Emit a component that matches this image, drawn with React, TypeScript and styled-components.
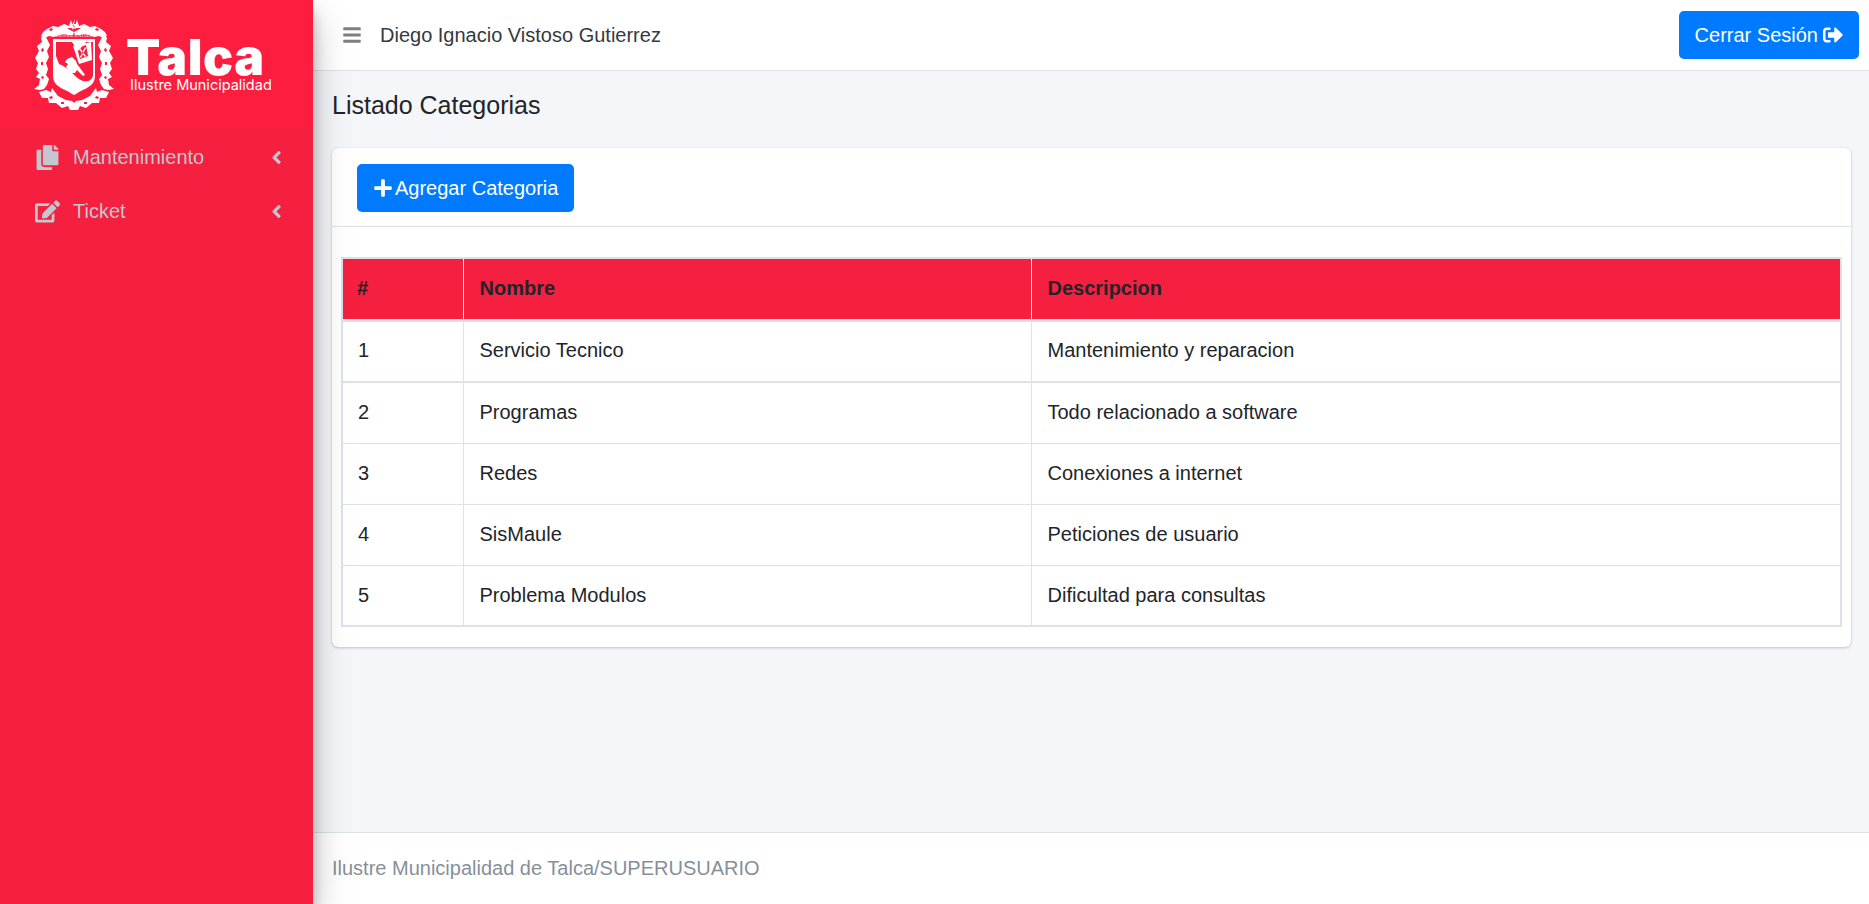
import styled, { createGlobalStyle } from 'styled-components';
import { FaAngleLeft, FaBars, FaCopy, FaEdit, FaPlus, FaSignOutAlt } from 'react-icons/fa';

const GlobalStyle = createGlobalStyle`
  html, body {
    margin: 0;
    padding: 0;
    height: 100%;
  }
  body {
    font-family: "Liberation Sans", Arial, sans-serif;
    font-size: 20px;
    color: #212529;
    background: #f4f6f9;
  }
  * {
    box-sizing: border-box;
  }
`;

const Layout = styled.div`
  display: flex;
  height: 904px;
  overflow: hidden;
`;

const Sidebar = styled.aside`
  position: relative;
  z-index: 2;
  flex: 0 0 313px;
  background: #f5203f;
  box-shadow: 0 17px 35px rgba(0, 0, 0, 0.25), 0 12px 12px rgba(0, 0, 0, 0.22);
`;

const Brand = styled.div`
  height: 127px;
  padding: 18px 0 0 34px;
  display: flex;
  background: #fd1d3f;
  color: #fff;
`;

const Crest = styled.svg`
  width: 80px;
  height: 92px;
  flex: none;
`;

const BrandText = styled.div`
  margin: 19px 0 0 12px;
  display: flex;
  flex-direction: column;
`;

const BrandName = styled.span`
  font-family: Inter, sans-serif;
  font-size: 50px;
  line-height: 40px;
  font-weight: 900;
  letter-spacing: 0.6px;
`;

const BrandSub = styled.span`
  margin: 0 0 0 4px;
  font-family: Inter, sans-serif;
  font-size: 14.5px;
  line-height: 16px;
  font-weight: 400;
  white-space: nowrap;
`;

const Menu = styled.nav`
  padding-top: 3px;
`;

const MenuRow = styled.a`
  height: 54px;
  display: flex;
  align-items: center;
  padding: 0 26px 0 35px;
  color: #c2c7d0;
  font-size: 20px;
`;

const MenuIcon = styled.span`
  flex: 0 0 38px;
  display: flex;
  justify-content: center;
  width: 38px;
  padding-right: 13px;
  font-size: 25px;
  svg {
    display: block;
  }
`;

const MenuLabel = styled.span`
  flex: 1;
`;

const MenuArrow = styled(FaAngleLeft)`
  font-size: 21px;
`;

const Main = styled.div`
  flex: 1;
  min-width: 0;
  display: flex;
  flex-direction: column;
`;

const Navbar = styled.header`
  height: 71px;
  flex: none;
  display: flex;
  align-items: center;
  padding: 0 10px 0 29px;
  background: #fff;
  border-bottom: 1px solid #dee2e6;
`;

const Burger = styled(FaBars)`
  font-size: 20px;
  color: #7f7f7f;
  margin-right: 18px;
`;

const UserName = styled.span`
  flex: 1;
  font-size: 20px;
  color: #343a40;
`;

const PrimaryButton = styled.button<{ $gap?: number }>`
  display: inline-flex;
  align-items: center;
  gap: ${props => props.$gap ?? 5}px;
  height: 48px;
  padding: 0 16px;
  border: 0;
  border-radius: 5px;
  background: #007bff;
  color: #fff;
  font: inherit;
  font-size: 20px;
`;

const Content = styled.main`
  flex: 1;
  padding: 0 18px 0 19px;
`;

const PageTitle = styled.h1`
  margin: 0;
  height: 77px;
  font-size: 25px;
  font-weight: 400;
  line-height: 68px;
  color: #212529;
`;

const Card = styled.section`
  background: #fff;
  border-radius: 6px;
  box-shadow: 0 0 1px rgba(0, 0, 0, 0.125), 0 1px 3px rgba(0, 0, 0, 0.2);
`;

const CardHeader = styled.div`
  height: 79px;
  padding: 16px 25px;
  border-bottom: 1px solid #dee2e6;
`;

const CardBody = styled.div`
  padding: 30px 9px 20px;
`;

const Table = styled.table`
  width: 100%;
  table-layout: fixed;
  border-collapse: collapse;
  border: 2px solid #dee2e6;
  font-size: 20px;
`;

const HeaderCell = styled.th`
  height: 62px;
  padding: 0 15px 0 16px;
  text-align: left;
  font-weight: 700;
  color: #212529;
  background: #f5203f;
  border-left: 1px solid #f4f6f9;
  border-bottom: 3px solid #dee2e6;
  &:first-child {
    padding-left: 14px;
    border-left: 0;
  }
`;

const Cell = styled.td`
  padding: 0 15px 0 16px;
  color: #212529;
  border: 1px solid #dee2e6;
  &:first-child {
    padding-left: 15px;
  }
`;

const Row = styled.tr<{ $strong?: boolean }>`
  td {
    height: ${props => (props.$strong ? 62 : 61)}px;
    padding-bottom: ${props => (props.$strong ? 2 : 0)}px;
    border-bottom-width: ${props => (props.$strong ? 2 : 1)}px;
  }
`;

const Footer = styled.footer`
  height: 72px;
  flex: none;
  display: flex;
  align-items: center;
  padding: 0 19px;
  background: #fff;
  border-top: 1px solid #dee2e6;
  color: #869099;
  font-size: 20px;
`;

const categories = [
  { id: 1, name: 'Servicio Tecnico', description: 'Mantenimiento y reparacion' },
  { id: 2, name: 'Programas', description: 'Todo relacionado a software' },
  { id: 3, name: 'Redes', description: 'Conexiones a internet' },
  { id: 4, name: 'SisMaule', description: 'Peticiones de usuario' },
  { id: 5, name: 'Problema Modulos', description: 'Dificultad para consultas' }
];

// one side of the crest's ornament, drawn twice (second time mirrored)
const CrestOrnament = () => (
  <g>
    <path d="M37 2l-2 6-5-2-6 3-5-1-6 3-4 3-2 4 4 2 4-2 5 1 5-2 5-1 4 1 5 0 1-3-4-2-3-2 4 0 3 1z" />
    <path d="M10 16l-3 4 1 4-5 4 2 5-4 7 3 5-2 6 3 4-3 4 4 2-1 6-5 4 6 1 4-1 3-4 2-6-3-4 2-6-2-6 3-6-2-6 3-6-3-6z" />
    <path d="M5 74l7-2 5 2 1-4 6 8 8 4 6 1 2 2v7h-4l-2-4-6 2-6-5-7 0-1-5-6 0z" />
    <path fill="#fd1d3f" d="M8 30l2 1-1 3-2-1zM7 44l2 0 0 3-2 0zM8 58l2 1-1 2-2-1zM15 79l3-1 1 2-3 1zM27 84l3 0 0 2-3 0zM15 11l3-1 1 2-3 1z" />
  </g>
);

const TalcaCrest = () => (
  <Crest viewBox="0 0 80 92" fill="#fff">
    <CrestOrnament />
    <g transform="matrix(-1 0 0 1 80 0)">
      <CrestOrnament />
    </g>
    <path d="M41 1l-3 6h2l-2 6 4-7h-2z" />
    <text x="40" y="19" textAnchor="middle" fontSize="4" fontFamily="Liberation Serif, serif" fill="#fff">
      PROVIDE SOLI LEX
    </text>
    {/* shield: white field, red band, flag and figure on top */}
    <path d="M19 21h42v37c0 9-8 12-14 15-3 1.500-5 3-7 4-2-1-4-2.500-7-4-6-3-14-6-14-15z" />
    <path fill="#fd1d3f" d="M22 24l16 0 6 9 8-9 7 0v34c-2 5-6 6-10 5-6-2-9-7-14-11-4-3-7-5-10-6l-3-8z" />
    <path d="M33 41l5-2 4 4 1 3 6 8 2 3-2 1-6-6-2 3-4 0-5-6 2-3-3-2z" />
    <path
      fillRule="evenodd"
      d="M39 28l18-4 1 18-13 4zM43 30l3 11 8-3-2-11zM45 31l1-1 6 8-1 1zM51 29l1 1-5 10-1-1z"
    />
  </Crest>
);

const App = () => (
  <>
    <GlobalStyle />
    <Layout>
      <Sidebar>
        <Brand>
          <TalcaCrest />
          <BrandText>
            <BrandName>Talca</BrandName>
            <BrandSub>Ilustre Municipalidad</BrandSub>
          </BrandText>
        </Brand>
        <Menu>
          <MenuRow>
            <MenuIcon>
              <FaCopy />
            </MenuIcon>
            <MenuLabel>Mantenimiento</MenuLabel>
            <MenuArrow />
          </MenuRow>
          <MenuRow>
            <MenuIcon>
              <FaEdit />
            </MenuIcon>
            <MenuLabel>Ticket</MenuLabel>
            <MenuArrow />
          </MenuRow>
        </Menu>
      </Sidebar>
      <Main>
        <Navbar>
          <Burger />
          <UserName>Diego Ignacio Vistoso Gutierrez</UserName>
          <PrimaryButton>
            Cerrar Sesión <FaSignOutAlt />
          </PrimaryButton>
        </Navbar>
        <Content>
          <PageTitle>Listado Categorias</PageTitle>
          <Card>
            <CardHeader>
              <PrimaryButton $gap={2}>
                <FaPlus /> Agregar Categoria
              </PrimaryButton>
            </CardHeader>
            <CardBody>
              <Table>
                <colgroup>
                  <col style={{ width: 121 }} />
                  <col style={{ width: 568 }} />
                  <col />
                </colgroup>
                <thead>
                  <tr>
                    <HeaderCell>#</HeaderCell>
                    <HeaderCell>Nombre</HeaderCell>
                    <HeaderCell>Descripcion</HeaderCell>
                  </tr>
                </thead>
                <tbody>
                  {categories.map(category => (
                    <Row key={category.id} $strong={category.id === 1}>
                      <Cell>{category.id}</Cell>
                      <Cell>{category.name}</Cell>
                      <Cell>{category.description}</Cell>
                    </Row>
                  ))}
                </tbody>
              </Table>
            </CardBody>
          </Card>
        </Content>
        <Footer>Ilustre Municipalidad de Talca/SUPERUSUARIO</Footer>
      </Main>
    </Layout>
  </>
);

export default App;
